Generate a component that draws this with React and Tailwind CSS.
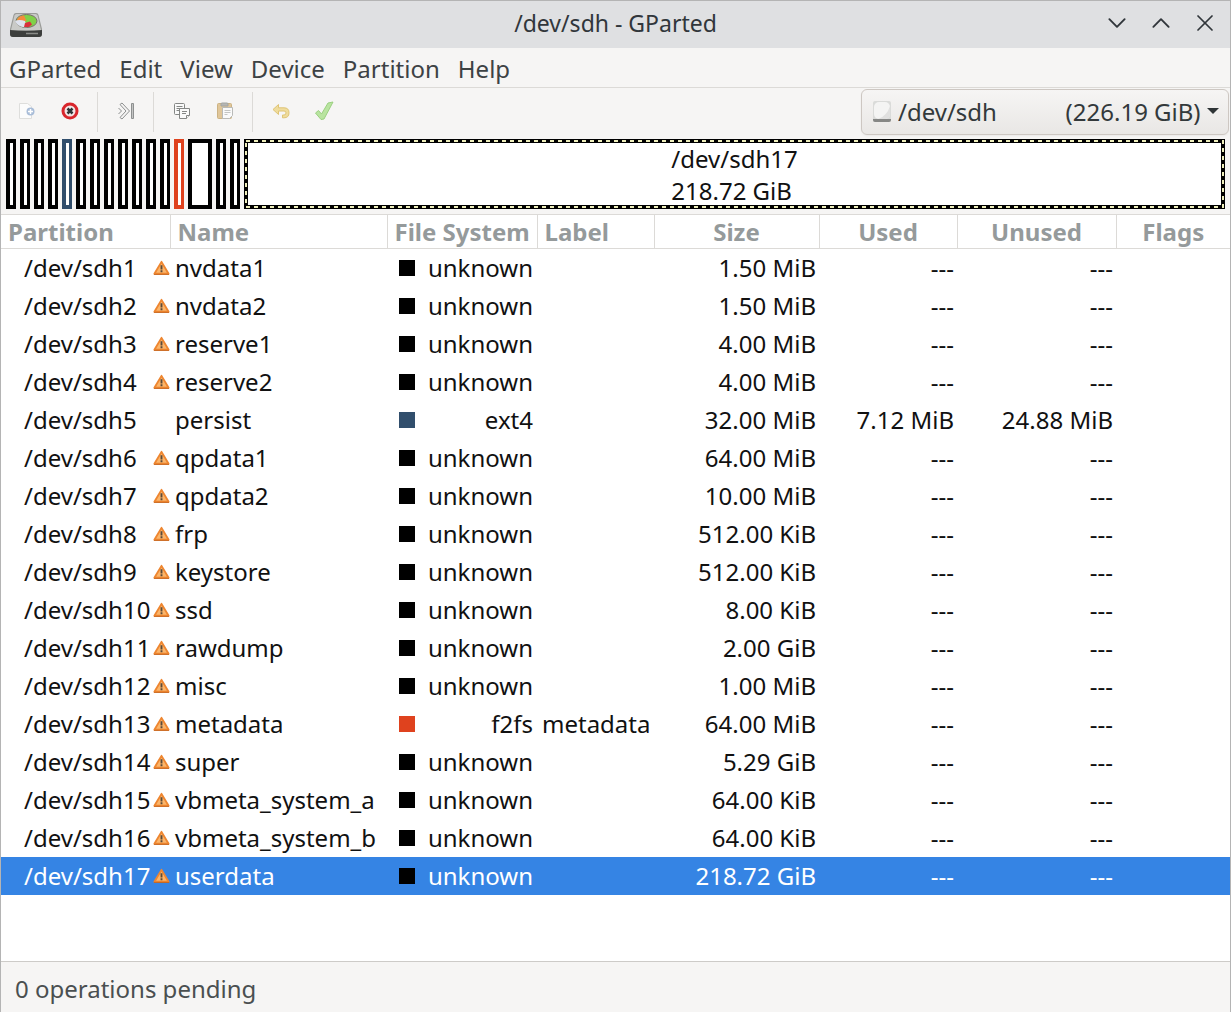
import { ChevronDown, ChevronUp, X } from "lucide-react";

const partitions = [
  { name: "nvdata1", size: "1.50 MiB" },
  { name: "nvdata2", size: "1.50 MiB" },
  { name: "reserve1", size: "4.00 MiB" },
  { name: "reserve2", size: "4.00 MiB" },
  { name: "persist", fs: "ext4", size: "32.00 MiB", used: "7.12 MiB", unused: "24.88 MiB", ok: true },
  { name: "qpdata1", size: "64.00 MiB" },
  { name: "qpdata2", size: "10.00 MiB" },
  { name: "frp", size: "512.00 KiB" },
  { name: "keystore", size: "512.00 KiB" },
  { name: "ssd", size: "8.00 KiB" },
  { name: "rawdump", size: "2.00 GiB" },
  { name: "misc", size: "1.00 MiB" },
  { name: "metadata", fs: "f2fs", label: "metadata", size: "64.00 MiB" },
  { name: "super", size: "5.29 GiB", wide: true },
  { name: "vbmeta_system_a", size: "64.00 KiB" },
  { name: "vbmeta_system_b", size: "64.00 KiB" },
  { name: "userdata", size: "218.72 GiB", selected: true },
].map((p, i) => ({ fs: "unknown", used: "---", unused: "---", label: "", ...p, path: `/dev/sdh${i + 1}` }));

const fsBg = { unknown: "bg-black", ext4: "bg-[#314e6c]", f2fs: "bg-[#df421e]" };
const fsBorder = { unknown: "border-black", ext4: "border-[#314e6c]", f2fs: "border-[#df421e]" };

const columns = [
  { title: "Partition", width: "w-[169px]", align: "text-left" },
  { title: "Name", width: "w-[217px]", align: "text-left" },
  { title: "File System", width: "w-[150px]", align: "text-left" },
  { title: "Label", width: "w-[117px]", align: "text-left" },
  { title: "Size", width: "w-[165px]", align: "text-center" },
  { title: "Used", width: "w-[138px]", align: "text-center" },
  { title: "Unused", width: "w-[159px]", align: "text-center" },
  { title: "Flags", width: "", align: "text-center" },
];

const AppIcon = () => (
  <svg viewBox="0 0 34 26" className="h-[26px] w-[34px]" aria-hidden="true">
    <path d="M7 1h20q2 0 2.500 2L33 17v5q0 3-3 3H4q-3 0-3-3v-5L4.500 3Q5 1 7 1z" fill="#9a9b98" />
    <path d="M7.500 2h19q1.500 0 2 1.500L32 18H2L5.500 3.500Q6 2 7.500 2z" fill="#c9cac7" />
    <ellipse cx="17.500" cy="9" rx="10.500" ry="6.500" fill="#7fd148" stroke="#77706a" />
    <path d="M17.500 9 8 9Q8 4 15 3.500z" fill="#f58a3c" />
    <path d="M6 9q4-2 10 0l2 6q-9 1-12-6z" fill="#dfe3ee" />
    <path d="M16 11l5-1.500 2 3-3 2.500h-5z" fill="#d8303a" />
    <path d="M1 18q16 2 32 0v4q0 3-3 3H4q-3 0-3-3z" fill="#3c3e3c" />
    <path d="M17 21.500h12" stroke="#8a8c88" strokeWidth="1.500" />
  </svg>
);

const NewIcon = () => (
  <svg viewBox="0 0 18 18" className="size-[18px]" aria-hidden="true">
    <path d="M1.500 1.500h8l4 3v12h-12z" fill="#fcfcfc" stroke="#dededc" />
    <circle cx="12.500" cy="9.500" r="4" fill="#a9bdd8" />
    <path d="M12.500 7v5M10 9.500h5" stroke="#fff" strokeWidth="1.500" />
  </svg>
);

const DeleteIcon = () => (
  <svg viewBox="0 0 18 18" className="size-[18px]" aria-hidden="true">
    <circle cx="9" cy="9" r="8.500" fill="#d9262c" />
    <circle cx="9" cy="9" r="5.500" fill="#f1e6e6" />
    <path d="m6.500 6.500 5 5m0-5-5 5" stroke="#2e3436" strokeWidth="2.500" />
  </svg>
);

const ResizeIcon = () => (
  <svg viewBox="0 0 18 18" className="size-[18px]" fill="none" stroke="#8e9090" aria-hidden="true">
    <path d="M3 2.500 5 1l7.500 8L5 17l-2-1.500L9 9z" />
    <path d="m1.500 6 3 3-3 3" />
    <path d="M14.500 1.500h2v15h-2z" fill="#c4c5c4" />
  </svg>
);

const CopyIcon = () => (
  <svg viewBox="0 0 18 18" className="size-[18px]" fill="#fafafa" stroke="#858785" aria-hidden="true">
    <rect x="1.500" y="1.500" width="10" height="11" rx="1" />
    <path d="M3.500 4.500h6M3.500 6.500h5M3.500 8.500h3" />
    <path d="M6.500 6.500h10v7l-3 3h-7z" />
    <path d="M9 9.500h5M9 11.500h4M13.500 16.500v-3h3" />
  </svg>
);

const PasteIcon = () => (
  <svg viewBox="0 0 18 18" className="size-[18px]" aria-hidden="true">
    <rect x="1.500" y="1.500" width="14" height="15" rx="1" fill="#e0c699" stroke="#ccb283" />
    <path d="M5 4V2q0-1 1-1h5q1 0 1 1v2z" fill="#b5b6b4" stroke="#a3a4a2" />
    <path d="M6.500 5.500h10v8l-3 3h-7z" fill="#fafafa" stroke="#b9bab8" />
    <path d="M8.500 8.500h6M8.500 10.500h6M8.500 12.500h3" stroke="#c4c5c3" />
  </svg>
);

const UndoIcon = () => (
  <svg viewBox="0 0 18 18" className="size-[18px]" aria-hidden="true">
    <path d="m1 7.500 5.500-5v3.300H12q5 0 5 5 0 5-5 5h-1.500v-2.800H12q2 0 2-2.100 0-1.900-2-1.900H6.500v3.500z" fill="#efdc9c" stroke="#dfc475" />
  </svg>
);

const ApplyIcon = () => (
  <svg viewBox="0 0 20 20" className="size-5" aria-hidden="true">
    <path d="m1.500 12 3-2.500 3 3.500L14 2l5-1-9 17-3 .5z" fill="#b9e4a0" stroke="#9bd080" />
  </svg>
);

const DiskIcon = () => (
  <svg viewBox="0 0 18 22" className="h-[22px] w-[18px]" aria-hidden="true">
    <rect x="0" y="0" width="18" height="21" rx="2" fill="#dadbd9" />
    <path d="M0 18h18v1q0 2-2 2H2q-2 0-2-2z" fill="#868785" />
    <rect x="1" y="1" width="16" height="17" rx="5" fill="#f4f4f3" />
    <path d="M17 5v8q0 5-5 5H5Q14 15 17 5z" fill="#e0e0df" />
  </svg>
);

const WarningIcon = () => (
  <svg viewBox="0 0 18 16" className="h-4 w-[17px] shrink-0" role="img" aria-label="Warning">
    <path d="M9 1.500 16.500 14h-15z" fill="#fbb56a" stroke="#ee8630" strokeWidth="2" strokeLinejoin="round" />
    <path d="M1 14.800h16" stroke="#c9651a" />
    <path d="M9 5v4.500M9 10.500v2" stroke="#5a4a3a" strokeWidth="2" />
  </svg>
);

const ToolButton = ({ label, children }) => (
  <button type="button" aria-label={label} className="flex h-11 w-[43px] items-center justify-center pb-[2px]">
    {children}
  </button>
);

const Separator = () => <div className="mx-[6px] h-10 w-px bg-[#dcdad7]" />;

const TitleBar = () => (
  <header className="grid h-[47px] grid-cols-[1fr_auto_1fr] items-center bg-[#dfe0e2] pb-1 text-[23px] text-[#31363b]">
    <div className="pl-2 pt-1">
      <AppIcon />
    </div>
    <h1>/dev/sdh - GParted</h1>
    <div className="flex justify-end gap-4 pr-[11px]">
      <button type="button" aria-label="Minimize"><ChevronDown className="size-7" strokeWidth={1.5} viewBox="1 1 22 22" /></button>
      <button type="button" aria-label="Maximize"><ChevronUp className="size-7" strokeWidth={1.5} viewBox="1 1 22 22" /></button>
      <button type="button" aria-label="Close"><X className="size-7" strokeWidth={1.5} /></button>
    </div>
  </header>
);

const MenuBar = () => (
  <nav className="flex h-10 items-center gap-[18px] border-b border-[#dcdad7] px-2 pt-[2px] text-[#3d4244]">
    {["GParted", "Edit", "View", "Device", "Partition", "Help"].map((item) => (
      <button type="button" key={item}>{item}</button>
    ))}
  </nav>
);

const Toolbar = () => (
  <div className="flex h-[47px] items-center pl-1">
    <ToolButton label="New"><NewIcon /></ToolButton>
    <ToolButton label="Delete"><DeleteIcon /></ToolButton>
    <Separator />
    <ToolButton label="Resize/Move"><ResizeIcon /></ToolButton>
    <Separator />
    <ToolButton label="Copy"><CopyIcon /></ToolButton>
    <ToolButton label="Paste"><PasteIcon /></ToolButton>
    <Separator />
    <ToolButton label="Undo"><UndoIcon /></ToolButton>
    <ToolButton label="Apply"><ApplyIcon /></ToolButton>
    <div className="relative ml-auto mr-px">
      <select
        aria-label="Device"
        className="h-[46px] w-[368px] appearance-none rounded-md border border-[#cdc7c2] bg-linear-to-b from-[#f6f5f4] to-[#e9e7e5] pl-9 text-[#33393b] shadow-xs"
      >
        <option>{`/dev/sdh${"\u00a0".repeat(11)}(226.19 GiB)`}</option>
      </select>
      <span className="pointer-events-none absolute left-3 top-3"><DiskIcon /></span>
      <svg viewBox="0 0 12 6" className="pointer-events-none absolute right-[10px] top-[19px] h-[6px] w-3" aria-hidden="true">
        <path d="M0 0h12L6 6z" fill="#2e3436" />
      </svg>
    </div>
  </div>
);

const DiskMap = () => (
  <div className="flex h-[79px] gap-1 px-[5px] pb-[5px] pt-1">
    {partitions.map((p) =>
      p.selected ? (
        <div key={p.path} className="relative flex flex-1 items-center justify-center bg-white pt-px leading-8 text-[#111]">
          <svg className="absolute inset-0 size-full" aria-hidden="true">
            <rect width="100%" height="100%" fill="none" stroke="#000" strokeWidth="8" />
            <rect x="2" y="2" className="h-[calc(100%-4px)] w-[calc(100%-4px)]" fill="none" stroke="#eeeebb" strokeWidth="2" strokeDasharray="4 4" />
          </svg>
          <div>
            <p>{p.path}</p>
            <p>{p.size}</p>
          </div>
        </div>
      ) : (
        <div
          key={p.path}
          className={`${p.wide ? "w-6 border-r-4" : "w-[10px] border-r-3"} border-y-4 border-l-4 bg-white ${fsBorder[p.fs]}`}
        />
      )
    )}
  </div>
);

const PartitionTable = () => (
  <table className="w-full table-fixed border-collapse whitespace-nowrap">
    <thead>
      <tr className="h-[34px] border-y border-[#dcdad7] text-[#959a9b]">
        {columns.map((c) => (
          <th key={c.title} scope="col" className={`${c.width} ${c.align} border-r border-[#dcdad7] px-[7px] py-0 leading-8 last:border-r-0`}>
            {c.title}
          </th>
        ))}
      </tr>
    </thead>
    <tbody>
      {partitions.map((p) => (
        <tr key={p.path} className={`h-[38px] ${p.selected ? "bg-[#3584e4] text-white" : "text-[#111]"}`}>
          <td className="p-0 pl-[23px]">
            <div className="flex items-center justify-between">
              <span className="w-[129px]">{p.path}</span>
              {!p.ok && <WarningIcon />}
            </div>
          </td>
          <td className="p-0 pl-[5px]">{p.name}</td>
          <td className="p-0 pl-3 pr-1">
            <div className="flex items-center justify-between">
              <span className={`size-4 ${fsBg[p.fs]}`} />
              {p.fs}
            </div>
          </td>
          <td className="p-0 pl-[5px]">{p.label}</td>
          <td className="p-0 pr-[3px] text-right">{p.size}</td>
          <td className="p-0 pr-[3px] text-right">{p.used}</td>
          <td className="p-0 pr-[3px] text-right">{p.unused}</td>
          <td className="p-0" />
        </tr>
      ))}
    </tbody>
  </table>
);

export default function App() {
  return (
    <div className="flex min-h-screen flex-col border-x border-t border-[#b4b4b4] bg-[#f6f5f4] font-['Noto_Sans',sans-serif] text-[24px] leading-8">
      <TitleBar />
      <MenuBar />
      <Toolbar />
      <DiskMap />
      <main className="flex-1 bg-white">
        <PartitionTable />
      </main>
      <footer className="h-[51px] border-t border-[#cdcbc8] px-[14px] pt-[11px] text-[#4a4f50]">0 operations pending</footer>
    </div>
  );
}
